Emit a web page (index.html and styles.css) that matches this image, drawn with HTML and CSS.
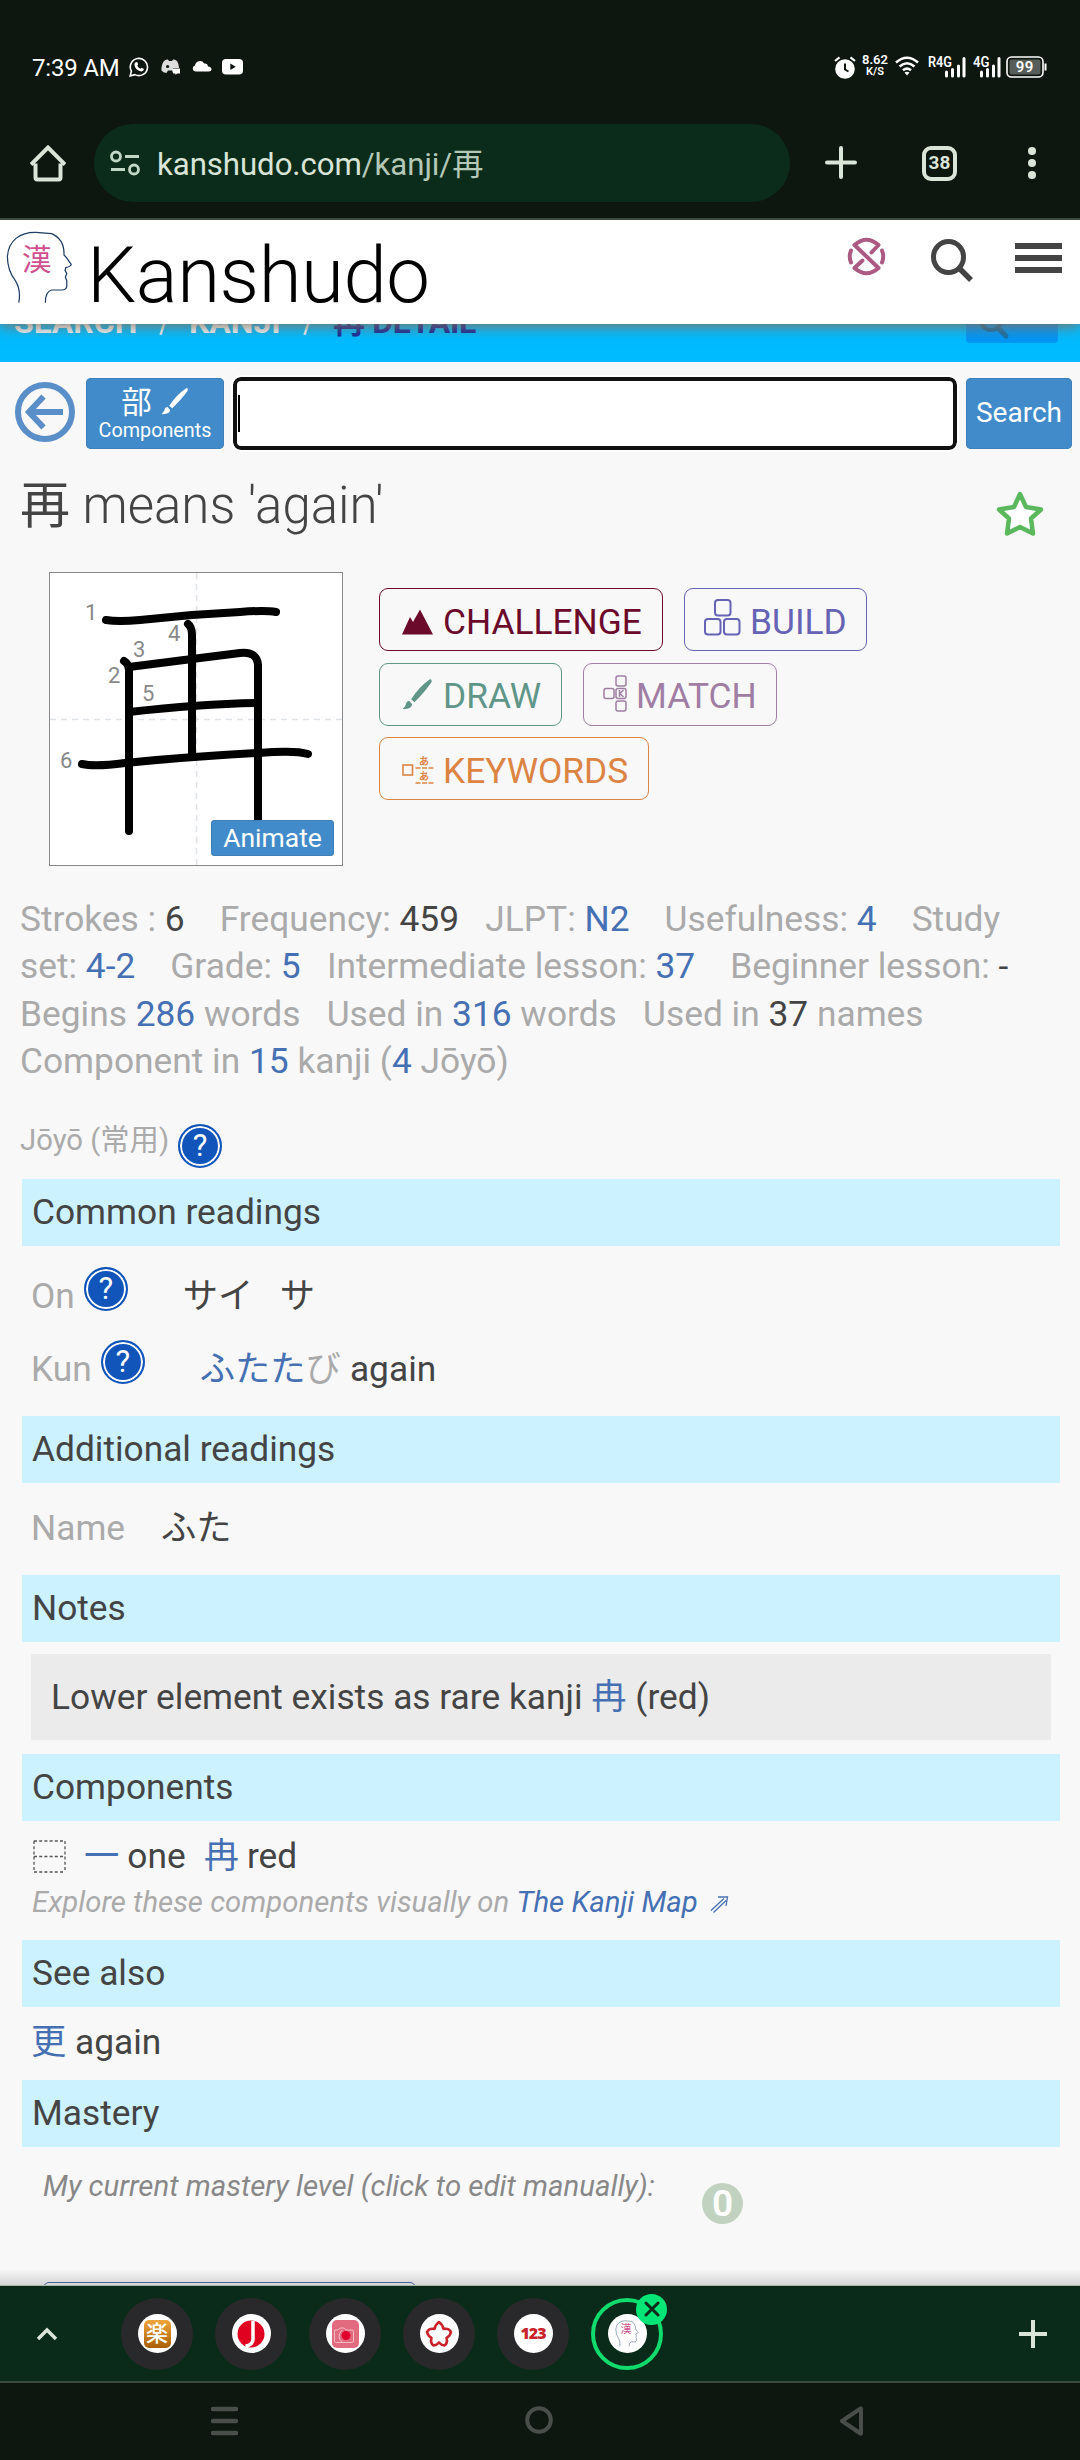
FILE: index.html
```html
<!DOCTYPE html>
<html lang="en">
<head>
<meta charset="utf-8">
<title>再 - Kanshudo</title>
<link rel="stylesheet" href="styles.css">
</head>
<body>
<svg class="defs" width="0" height="0" aria-hidden="true">
  <symbol id="head" viewBox="15 60 200 222" preserveAspectRatio="none">
    <path d="M55 278Q62 240 45 212Q22 180 22 140C25 90 60 66 105 67L150 71C175 82 187 105 186 135L193 143L207 163Q205 170 191 173L189 182L194 190L190 202L194 212V230Q192 240 180 240H150Q132 245 132 278" fill="none" stroke="#1f3d63" stroke-width="3.6"/>
  </symbol>
  <symbol id="brush" viewBox="120 350 92 96" preserveAspectRatio="none">
    <path d="M203 354Q209 352 208 362Q190 389 157 423L147 414Q172 375 203 354ZM142 419L150 429Q150 444 122 443Q132 434 133 424Q136 418 142 419Z" fill="currentColor"/>
  </symbol>
</svg>

<header class="status">
  <span class="clock">7:39 AM</span>
  <svg class="ic-wa" width="20" height="20" viewBox="0 0 20 20"><path d="M1.2 18.8L2.4 14.2A8.6 8.6 0 1 1 5.9 17.6Z" fill="none" stroke="#fff" stroke-width="1.6"/><path d="M6.6 5.2L8.2 5L9.2 7.6L8.3 8.8Q9.2 10.8 11.4 11.8L12.6 10.8L15 12Q14.6 14.6 12.2 14.4Q6 13.4 5.4 7.6Q5.5 6 6.6 5.2Z" fill="#fff"/></svg>
  <svg class="ic-dc" width="19" height="16" viewBox="0 0 19 16"><path d="M3 2Q5 .6 7 .6L8 2H11L12 .6Q14 .6 16 2Q18 5 18 9H12V14L11 11.5H7L5.5 14Q2 13.5.5 11.5Q0 6 3 2Z" fill="#ddd"/><circle cx="6.6" cy="7.5" r="1.6" fill="#0d160f"/><path d="M12 9.5h7v5h-3l-1.500 1.5V14.500H12Z" fill="#fff"/></svg>
  <svg class="ic-cl" width="20" height="12" viewBox="0 0 20 12"><path d="M3.500 11.500A3 3 0 0 1 3 5.600A5 5 0 0 1 12.200 3.500Q15.500 3 16 6.600Q19.500 7 19.500 9.400Q19.500 11.500 17 11.500Z" fill="#fff"/></svg>
  <svg class="ic-yt" width="21" height="16" viewBox="0 0 21 16"><rect width="21" height="15.500" rx="4" fill="#fff"/><path d="M8.300 4.600V11L13.800 7.800Z" fill="#0d160f"/></svg>
  <span class="spacer"></span>
  <svg class="ic-alarm" width="22" height="23" viewBox="0 0 22 23"><circle cx="11" cy="13" r="9.800" fill="#fff"/><path d="M11 7.500V13.500L14.500 15.500" fill="none" stroke="#0d160f" stroke-width="2"/><path d="M1 5L5.500 1.300M21 5L16.500 1.300" stroke="#fff" stroke-width="2.200"/></svg>
  <span class="rate"><b>8.62</b><b class="unit">K/S</b></span>
  <svg class="ic-wifi" width="24" height="20" viewBox="0 0 24 20"><path d="M1 6.500Q12-3 23 6.500M4.500 10.500Q12 4 19.500 10.500M8 14.300Q12 11 16 14.300" fill="none" stroke="#fff" stroke-width="2.600"/><path d="M9.500 16.500Q12 14.800 14.500 16.500L12 19.500Z" fill="#fff"/></svg>
  <svg class="ic-sim1" width="38" height="23" viewBox="0 0 38 23"><text x="0" y="11.500" class="net" textLength="24" lengthAdjust="spacingAndGlyphs">R4G</text><path d="M18.500 17v4M24.500 14.500v6.500M30.500 11v10M36 3.500v17.500" stroke="#fff" stroke-width="3" stroke-linecap="round"/></svg>
  <svg class="ic-sim2" width="28" height="23" viewBox="0 0 28 23"><text x="0" y="11.500" class="net" textLength="16.500" lengthAdjust="spacingAndGlyphs">4G</text><path d="M8.500 17v4M14.500 14.500v6.500M20.500 11v10M26 3.500v17.500" stroke="#fff" stroke-width="3" stroke-linecap="round"/></svg>
  <svg class="ic-bat" width="42" height="22" viewBox="0 0 42 22"><rect x="1" y="1" width="36" height="20" rx="4.500" fill="none" stroke="#fff" stroke-width="1.600"/><rect x="3.500" y="3.500" width="31" height="15" rx="2" fill="#575d58"/><path d="M39.500 7.500v7" stroke="#fff" stroke-width="2"/><text x="18.700" y="16.200" text-anchor="middle" class="bat">99</text></svg>
</header>

<nav class="toolbar">
  <svg class="home" width="36" height="37" viewBox="0 0 36 37"><path d="M5.500 18.500V32.500Q5.500 34.500 7.500 34.500H28.500Q30.500 34.500 30.500 32.500V18.500M1 19.500L18 2.500L35 19.500" fill="none" stroke="#d8e5d8" stroke-width="4"/></svg>
  <div class="omnibox">
    <svg width="30" height="26" viewBox="0 0 30 26" fill="none" stroke="#c2d6c5" stroke-width="2.800"><circle cx="6" cy="6.500" r="4.500"/><path d="M15 6.500H29M1 19.500H15"/><circle cx="24" cy="19.500" r="4.500"/></svg>
    <span class="url">kanshudo.com<i>/kanji/再</i></span>
  </div>
  <svg class="plus" width="32" height="33" viewBox="0 0 32 33"><path d="M16 2V31M2 16.500H30" stroke="#d8e5d8" stroke-width="4" stroke-linecap="round"/></svg>
  <span class="tabs">38</span>
  <svg class="dots" width="8" height="34" viewBox="0 0 8 34" fill="#d8e5d8"><circle cx="4" cy="5" r="4"/><circle cx="4" cy="17" r="4"/><circle cx="4" cy="29" r="4"/></svg>
</nav>

<section class="site-head">
  <div class="logo"><svg width="69" height="74"><use href="#head"/></svg><span class="logo-kanji">漢</span></div>
  <span class="brand">Kanshudo</span>
  <svg class="ic-cross" width="39" height="39" viewBox="-19.500 -19.500 39 39" fill="none" stroke="#ad5a82" stroke-width="4" stroke-linecap="round" stroke-linejoin="round"><path d="M5 -4L12 -11.500Q0 -22 -12 -11.500L12 11.500Q0 22 -12 11.500L-4 4M-15.500 -6Q-18 0 -15.500 6M15.500 -6Q18 0 15.500 6"/></svg>
  <svg class="ic-search" width="42" height="43" viewBox="0 0 42 43" fill="none" stroke="#444"><ellipse cx="17.500" cy="18" rx="15" ry="15.500" stroke-width="5"/><path d="M28 29L40 41" stroke-width="5.500"/></svg>
  <svg class="ic-menu" width="47" height="30" viewBox="0 0 47 30"><path d="M0 3H47M0 15H47M0 27H47" stroke="#444" stroke-width="6"/></svg>
</section>

<div class="crumbs">
  <span class="c1">SEARCH</span><span class="sep">⟩</span><span class="c2">KANJI</span><span class="sep">⟩</span><span class="here">再 DETAIL</span>
  <span class="crumb-btn"><svg width="32" height="32" viewBox="0 0 32 32" fill="none" stroke="#1470a8"><circle cx="13" cy="11" r="10" stroke-width="4"/><path d="M20 19L28 27" stroke-width="5" stroke-linecap="round"/></svg></span>
</div>

<main>
  <form class="search-row">
    <svg class="back" width="60" height="60" viewBox="0 0 60 60" fill="none" stroke="#5a8ec8"><circle cx="30" cy="30" r="27" stroke-width="6"/><path d="M48 30H15M28.500 14.500L14 30L28.500 45.500" stroke-width="6"/></svg>
    <span class="components-btn"><span class="row">部<svg width="28" height="28"><use href="#brush"/></svg></span><small>Components</small></span>
    <span class="field"><span class="caret"></span></span>
    <span class="go">Search</span>
  </form>

  <div class="title-row">
    <h1><b>再</b> means 'again'</h1>
    <svg width="48" height="46" viewBox="0 0 48 46"><path d="M24 3L30 16L45 18.500L35 27.500L37 42.500L24 36L11 42.500L13 27.500L3 18.500L18 16Z" fill="#fff" stroke="#5cb85c" stroke-width="4.500" stroke-linejoin="round"/></svg>
  </div>

  <div class="practice">
    <div class="diagram">
      <svg width="292" height="292" viewBox="0 0 292 292">
        <path d="M146.500 0V292M0 146.500H292" stroke="#dfe3e8" stroke-width="1.500" stroke-dasharray="6 5"/>
        <g fill="none" stroke="#000" stroke-width="8" stroke-linecap="round" stroke-linejoin="round">
          <path d="M56 47Q68 49 90 47L142 42L190 39Q215 37 226 39"/>
          <path d="M74 88Q79 91 79 98V258"/>
          <path d="M79 94L142 86L190 80Q207 78 208 92V258"/>
          <path d="M138 51Q142 54 142 62V183"/>
          <path d="M79 139Q150 131 207 130"/>
          <path d="M32 191Q45 194 75 190Q135 184 208 180Q245 177 258 181"/>
        </g>
        <g class="nums"><text x="35" y="47">1</text><text x="58" y="110">2</text><text x="83" y="84">3</text><text x="118" y="68">4</text><text x="92" y="128">5</text><text x="10" y="195">6</text></g>
      </svg>
      <span class="animate">Animate</span>
    </div>
    <div class="modes">
      <span class="mode challenge"><svg width="31" height="26" viewBox="0 0 31 26"><path d="M0 25.500L8 8L11 13L18 .5L31 25.500Z" fill="currentColor"/></svg>CHALLENGE</span>
      <span class="mode build"><svg width="37" height="37" viewBox="0 0 37 37" fill="none" stroke="currentColor" stroke-width="2"><rect x="11" y="1" width="15.500" height="15.500" rx="3"/><rect x="1" y="20" width="15.500" height="15.500" rx="3"/><rect x="20" y="20" width="15.500" height="15.500" rx="3"/></svg>BUILD</span>
      <span class="mode draw"><svg width="31" height="32"><use href="#brush"/></svg>DRAW</span>
      <span class="mode match"><svg width="24" height="37" viewBox="0 0 24 37" fill="none" stroke="currentColor" stroke-width="1.500"><rect x="13" y="1" width="10" height="10" rx="2"/><rect x="1" y="13.500" width="10" height="10" rx="2"/><rect x="13" y="13.500" width="10" height="10" rx="2"/><rect x="13" y="26" width="10" height="10" rx="2"/><path d="M16.500 15V22M20.500 15L17 18.500L20.500 22"/></svg>MATCH</span>
      <span class="mode keywords"><svg width="32" height="29" viewBox="0 0 32 29"><rect x="1" y="10" width="9.500" height="10" fill="none" stroke="currentColor" stroke-width="1.600"/><text x="17" y="9.500">あ</text><text x="17" y="25">あ</text><path d="M13.500 13H32M13.500 28H32" stroke="currentColor" stroke-width="1.500" stroke-dasharray="5 1.500"/></svg>KEYWORDS</span>
    </div>
  </div>

  <div class="facts">
    <div>Strokes : <b>6</b> &nbsp;&nbsp; Frequency: <b>459</b> &nbsp; JLPT: <a>N2</a> &nbsp;&nbsp; Usefulness: <a>4</a> &nbsp;&nbsp; Study</div>
    <div>set: <a>4-2</a> &nbsp;&nbsp; Grade: <a>5</a> &nbsp; Intermediate lesson: <a>37</a> &nbsp;&nbsp; Beginner lesson: <b>-</b></div>
    <div>Begins <a>286</a> words &nbsp; Used in <a>316</a> words &nbsp; Used in <b>37</b> names</div>
    <div>Component in <a>15</a> kanji (<a>4</a> Jōyō)</div>
  </div>

  <div class="jouyou">Jōyō (常用)<span class="help">?</span></div>

  <h2>Common readings</h2>
  <div class="readings">
    <div class="reading"><span>On</span><span class="help">?</span><b class="on1">サイ</b><b class="on2">サ</b></div>
    <div class="reading"><span>Kun</span><span class="help">?</span><a>ふたた</a><span>び</span><b class="mean">again</b></div>
  </div>

  <h2>Additional readings</h2>
  <div class="names"><span>Name</span><b>ふた</b></div>

  <h2>Notes</h2>
  <p class="note">Lower element exists as rare kanji <a>冉</a> (red)</p>

  <h2>Components</h2>
  <div class="parts">
    <svg width="33" height="33" viewBox="0 0 33 33"><path d="M1 1H32M1 16.500H32M1 32H32M1 1V32M32 1V32" fill="none" stroke="#555" stroke-width="1.300" stroke-dasharray="3 2.200"/></svg>
    <a class="one">一</a><b>one</b><a class="ran">冉</a><b>red</b>
  </div>
  <p class="explore">Explore these components visually on <a>The Kanji Map</a><svg width="19" height="19" viewBox="0 0 19 19" fill="none" stroke="#4670b4" stroke-width="1.300"><path d="M1 15.500L14 3.500M3.500 17.500L16 5.500M8 2H17.500L16 11"/></svg></p>

  <h2>See also</h2>
  <div class="also"><a>更</a> again</div>

  <h2>Mastery</h2>
  <div class="mastery"><span class="prompt">My current mastery level (click to edit manually):</span><span class="level">0</span></div>
  <div class="cut-btn"></div>
</main>

<nav class="tabstrip">
  <svg class="chev" width="22" height="14" viewBox="0 0 22 14"><path d="M2 12L11 3L20 12" fill="none" stroke="#d8e5d8" stroke-width="3.500"/></svg>
  <span class="tab"><span class="fav raku"><i>楽</i></span></span>
  <span class="tab"><span class="fav"><svg width="28" height="28" viewBox="0 0 28 28"><circle cx="14" cy="14" r="13.500" fill="#e00020"/><path d="M16 1V19Q16 25 8.500 26" fill="none" stroke="#fff" stroke-width="3.500"/></svg></span></span>
  <span class="tab"><span class="fav"><svg width="27" height="28" viewBox="0 0 27 28"><rect width="27" height="28" rx="5" fill="#e36b80"/><path d="M2.500 10H6L8 8H12L14 10H20Q21.500 10 21.500 12V21Q21.500 22.500 20 22.500H4Q2.500 22.500 2.500 21ZM10 10Q4 17 10 22" fill="none" stroke="#f5b9c4"/><circle cx="14" cy="15.500" r="4.500" fill="#e0002d"/></svg></span></span>
  <span class="tab"><span class="fav"><svg width="28" height="28" viewBox="0 0 28 28"><path d="M14 2Q18 5 18.500 9Q24 8 26 12Q25 16 21.500 18Q23 23 19.500 25.500Q16 25 14 22.500Q12 25 8.500 25.500Q5 23 6.500 18Q3 16 2 12Q4 8 9.500 9Q10 5 14 2Z" fill="#fff" stroke="#c9222b" stroke-width="2.600" stroke-linejoin="round"/></svg></span></span>
  <span class="tab"><span class="fav num">123</span></span>
  <span class="tab active"><span class="fav"><svg width="24" height="27"><use href="#head"/></svg><i class="mini">漢</i></span><span class="close"><svg width="16" height="16" viewBox="0 0 16 16"><path d="M2 2L14 14M14 2L2 14" stroke="#0a2b19" stroke-width="3" stroke-linecap="round"/></svg></span></span>
  <svg class="add" width="28" height="28" viewBox="0 0 28 28"><path d="M14 0V28M0 14H28" stroke="#d8e5d8" stroke-width="4"/></svg>
</nav>

<footer class="sysnav">
  <svg width="27" height="30" viewBox="0 0 27 30"><path d="M2 3H25M2 15H25M2 27H25" stroke="#4a4e4a" stroke-width="4.500" stroke-linecap="round"/></svg>
  <svg width="28" height="28" viewBox="0 0 28 28"><circle cx="14" cy="14" r="11.800" fill="none" stroke="#4a4e4a" stroke-width="4"/></svg>
  <svg width="24" height="30" viewBox="0 0 24 30"><path d="M2 15L20.500 2.500Q21 2 21 3V27Q21 28 20.500 27.500Z" fill="none" stroke="#4a4e4a" stroke-width="4" stroke-linejoin="round"/></svg>
</footer>
</body>
</html>
```
FILE: styles.css
```css
* { box-sizing: border-box; }
body {
  margin: 0; width: 1080px; height: 2460px; overflow: hidden;
  display: flex; flex-direction: column; background: #0d160f;
  font-family: Roboto, "Noto Sans CJK JP", sans-serif; color: #444;
}
svg { display: block; flex: none; }
.defs { position: absolute; }
b, i { font-weight: inherit; font-style: inherit; }
.spacer { flex: 1; }

/* Android status bar */
.status { height: 124px; flex: none; display: flex; align-items: flex-start; color: #fff; padding: 0 32px; }
.clock { font-size: 24px; line-height: 30px; margin-top: 53px; width: 97px; white-space: nowrap; letter-spacing: -.2px; }
.ic-wa { margin-top: 57px; }
.ic-dc { margin: 59px 0 0 12px; }
.ic-cl { margin: 60px 0 0 12px; }
.ic-yt { margin: 59px 0 0 10px; }
.ic-alarm { margin-top: 56px; }
.rate { margin: 54px 0 0 6px; width: 26px; display: flex; flex-direction: column; align-items: center; font-size: 13px; line-height: 12px; font-weight: 600; }
.rate .unit { font-size: 11px; line-height: 12px; }
.ic-wifi { margin: 56px 0 0 7px; }
.ic-sim1 { margin: 55px 0 0 9px; }
.ic-sim2 { margin: 55px 0 0 7px; }
.ic-bat { margin: 56px 0 0 5px; }
.net { font-size: 14px; font-weight: 600; fill: #fff; }
.bat { font-size: 15px; font-weight: 600; fill: #fff; letter-spacing: .5px; }

/* Browser toolbar */
.toolbar { height: 96px; flex: none; display: flex; align-items: flex-start; border-bottom: 2px solid #3c4a40; }
.home { margin: 21px 0 0 30px; }
.omnibox { margin-left: 28px; width: 696px; height: 78px; border-radius: 39px; background: #0b2c1a; display: flex; align-items: center; padding-left: 16px; }
.url { font-size: 31.2px; line-height: 78px; margin-left: 17px; color: #d8e5d8; padding-top: 4px; letter-spacing: -.06px; }
.url i { color: #b4c8b8; }
.plus { margin: 22px 0 0 35px; }
.tabs { margin: 22px 0 0 65px; width: 35px; height: 35px; border: 4px solid #d8e5d8; border-radius: 9px; font-size: 19px; font-weight: 700; line-height: 24px; text-align: center; color: #d8e5d8; padding-top: 1px; }
.dots { margin: 22px 0 0 71px; }

/* Site header */
.site-head { height: 104px; flex: none; background: #fff; display: flex; align-items: flex-start; position: relative; z-index: 2; box-shadow: 0 3px 13px rgba(135, 110, 90, .9); clip-path: inset(0 0 -30px 0); }
.logo { margin: 10px 0 0 5px; width: 69px; position: relative; }
.logo-kanji { position: absolute; left: 17px; top: 14px; font-size: 29.5px; line-height: 32px; color: #d0508f; }
.brand { font-size: 78px; font-weight: 300; line-height: 80px; letter-spacing: -.45px; color: #000; margin: 16px 0 0 13px; width: 749px; }
.ic-cross { margin: 17px 0 0 11px; }
.ic-search { margin: 19px 0 0 45px; }
.ic-menu { margin: 23px 0 0 42px; }

/* Breadcrumbs, partly under the header */
.crumbs { height: 38px; flex: none; background: #0bf; display: flex; align-items: flex-start; font-weight: 700; font-size: 32px; line-height: 40px; color: #e8f6fc; padding-left: 14px; }
.crumbs > span { margin-top: -22px; white-space: nowrap; }
.c1 { width: 143px; }
.crumbs .sep { width: 32px; font-weight: 300; font-size: 28px; }
.c2 { width: 112px; }
.here { color: #122a9c; width: 633px; letter-spacing: -.3px; }
.crumbs .crumb-btn { width: 92px; height: 38px; margin-top: -19px; background: #0096f5; border-radius: 4px; padding: 4px 0 0 12px; }

main { height: 1924px; flex: none; background: #f8f8f8; overflow: hidden; position: relative; padding: 0 20px; border-bottom: 1px solid #a9b8ac; }
main::after { content: ""; position: absolute; left: 0; right: 0; bottom: 0; height: 16px; background: linear-gradient(rgba(0, 0, 0, 0), rgba(0, 0, 0, .14)); }
a { color: #4670b4; }

.search-row { margin: 15px -12px 0 -5px; height: 73px; display: flex; align-items: center; color: #fff; }
.back { margin-top: -3px; }
.components-btn { margin-left: 11px; width: 138px; height: 71px; background: #428bca; border-radius: 5px; display: flex; flex-direction: column; align-items: center; box-shadow: inset 0 0 0 1px #3f80bb; }
.components-btn .row { display: flex; gap: 9px; font-size: 30.500px; line-height: 42px; height: 42px; padding-top: 4px; }
.components-btn svg { margin-top: 5px; }
.components-btn small { font-size: 19.8px; line-height: 22px; }
.field { margin-left: 9px; width: 724px; height: 73px; background: #fff; border: 4px solid #111; border-radius: 8px; outline: 2px solid #fff; }
.caret { display: block; width: 2px; height: 37px; background: #000; margin: 14px 0 0 1px; }
.go { margin-left: 9px; width: 106px; height: 71px; background: #428bca; border-radius: 5px; font-size: 28px; line-height: 69px; text-align: center; box-shadow: inset 0 0 0 1px #3f80bb; }

.title-row { height: 108px; margin-top: 14px; display: flex; justify-content: space-between; align-items: flex-start; padding-right: 16px; }
.title-row svg { margin-top: 27px; }
h1 { margin: 0; font-size: 51px; font-weight: 300; line-height: 83px; }
h1 b { font-weight: 400; font-size: 50px; }

.practice { display: flex; height: 294px; margin-left: 29px; }
.diagram { width: 294px; height: 294px; border: 1px solid #888; background: #fff; position: relative; }
.nums { font-size: 22px; fill: #888; }
.animate { position: absolute; right: 8px; bottom: 9px; width: 123px; height: 36px; border-radius: 4px; background: #428bca; box-shadow: inset 0 0 0 1px #3f80bb; color: #fff; font-size: 26.500px; line-height: 35px; text-align: center; }
.modes { margin: 16px 0 0 36px; width: 560px; display: flex; flex-wrap: wrap; gap: 11.500px 21px; align-content: flex-start; }
.mode { height: 63px; border: 1px solid; border-radius: 9px; display: flex; align-items: center; font-size: 35.3px; line-height: 68px; padding: 4px 0 0 22px; white-space: nowrap; }
.modes .mode svg { margin-right: 10px; }
.challenge { width: 284px; color: #6b0a2b; }
.build { width: 183px; color: #6663b5; padding-left: 19px; }
.modes .build svg { margin-right: 9px; margin-top: -8px; }
.draw { width: 183px; color: #5f9688; }
.modes .draw svg { margin-top: -5px; }
.match { width: 194px; color: #a07ea3; padding-left: 19px; }
.modes .match svg { margin-right: 9px; margin-top: -5px; }
.keywords { width: 270px; color: #dc8444; }
.modes .keywords svg { margin-right: 9px; margin-top: -2px; }
.keywords text { font-size: 10px; font-weight: 700; fill: currentColor; }

.facts { margin-top: 29px; padding-top: 1px; height: 190px; font-size: 35.320px; line-height: 47.330px; color: #aaa; white-space: nowrap; }
.facts b, .reading b, .names b, .parts b { color: #444; }
.jouyou { margin-top: 25px; height: 60px; display: flex; font-size: 29.3px; line-height: 61px; color: #aaa; }
.help { width: 44px; height: 44px; border-radius: 50%; background: #1155bb; border: 2px solid #1155bb; box-shadow: inset 0 0 0 2px #fff; color: #fff; font-size: 31px; line-height: 40px; text-align: center; flex: none; }
.jouyou .help { margin: 14px 0 0 9px; }

h2 { margin: 9px 0 0 2px; width: 1038px; height: 67px; background: #ccf1ff; font-size: 35.3px; line-height: 66px; font-weight: 400; padding-left: 10px; }
.readings { padding: 14px 0 1px 11px; font-size: 35.3px; }
.reading { display: flex; height: 73px; line-height: 73px; color: #aaa; }
.reading .help { margin: 7px 0 0 9px; line-height: 40px; }
.on1 { margin-left: 55px; width: 97px; }
.reading a { margin-left: 55px; }
.mean { margin-left: 9px; }
.names { height: 83px; line-height: 91px; padding-left: 11px; display: flex; gap: 36px; font-size: 35.3px; color: #aaa; }
.note { margin: 12px 0 0 11px; width: 1020px; height: 86px; background: #ebebeb; font-size: 35.3px; line-height: 86px; padding-left: 20px; }
.note + h2 { margin-top: 14px; }
.parts { display: flex; align-items: center; height: 48px; margin: 11px 0 0 13px; font-size: 35.3px; line-height: 48px; }
.parts b { margin-left: 8px; }
.one { margin-left: 18px; }
.ran { margin-left: 18px; }
.explore { display: flex; align-items: center; margin: 0 0 0 12px; height: 51px; padding-bottom: 7px; line-height: 44px; font-size: 29.35px; font-style: italic; color: #aaa; white-space: pre; }
.explore svg { margin: 4px 0 0 12px; }
.also { height: 64px; line-height: 71px; padding-left: 11px; font-size: 35.3px; }
.mastery { height: 135px; display: flex; padding: 21px 0 0 23px; font-size: 29.4px; line-height: 36px; font-style: italic; color: #888; }
.prompt { width: 611px; white-space: nowrap; }
.level { margin: 15px 0 0 48px; width: 41px; height: 41px; border-radius: 50%; background: #c1d3c0; color: #fff; font-style: normal; font-weight: 600; font-size: 37px; line-height: 41px; text-align: center; }
.cut-btn { margin-left: 23px; width: 373px; height: 40px; border: 1px solid #4c6fae; border-radius: 6px; }

/* Tab strip */
.tabstrip { height: 97px; flex: none; background: #0a2b19; border-bottom: 2px solid #3c4a40; display: flex; align-items: center; }
.chev { margin: 0 62px 0 36px; }
.tab { width: 72px; height: 72px; border-radius: 50%; background: #29292c; margin-left: 1px; margin-right: 21px; display: flex; align-items: center; justify-content: center; position: relative; flex: none; }
.fav { width: 39px; height: 39px; border-radius: 50%; background: #fff; display: flex; align-items: center; justify-content: center; position: relative; }
.raku i { width: 27px; height: 28px; border-radius: 5px; background: linear-gradient(#f0a63a, #a85f08); color: #fff; font-size: 22px; line-height: 27px; text-align: center; font-weight: 500; }
.num { font: 800 16px/39px "Open Sans", sans-serif; color: #c9222b; letter-spacing: -1px; }
.active { background: none; border: 4px solid #10dc6e; }
.mini { position: absolute; left: 13px; top: 9px; font-size: 11px; line-height: 14px; color: #d0508f; }
.close { position: absolute; right: -8px; top: -8px; width: 31px; height: 31px; border-radius: 50%; background: #00e676; display: flex; align-items: center; justify-content: center; }
.add { margin-left: 335px; }

.sysnav { flex: 1; display: flex; align-items: flex-start; padding: 23px 0 0 211px; }
.sysnav svg + svg { margin-left: 287px; }
```
